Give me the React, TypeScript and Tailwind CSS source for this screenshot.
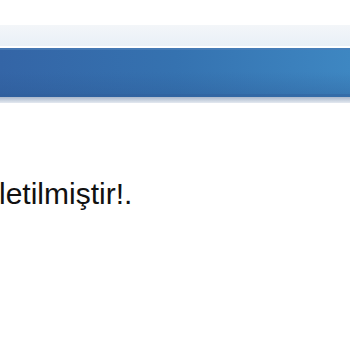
import React from "react";

export default function App() {
  return (
    <div className="w-[350px] h-[350px] bg-white overflow-hidden flex flex-col" style={{ fontFamily: '"Liberation Sans", Arial, sans-serif' }}>
      <div className="h-[25px] bg-white" />
      <div className="h-[21px] bg-gradient-to-b from-[#f3f6f9] to-[#e9f0f7]" />
      <div className="h-[2px] bg-white" />
      <div className="h-[49px] flex flex-col bg-gradient-to-r from-[#3465a6] via-[#3572b0] to-[#3e87c2]">
        <div className="h-[2px] bg-[#4d7fb8]/70" />
        <div className="flex-1 bg-gradient-to-b from-transparent via-transparent to-[#2a5590]/30" />
        <div className="h-[3px] bg-[#2e5b98]/60" />
      </div>
      <div className="h-[6px] bg-gradient-to-b from-[#aab8cc] to-[#e4e9f0]" />
      <div className="h-[74px]" />
      <div className="text-[30px] leading-[34px] text-[#111] ml-[-1px] whitespace-nowrap">letilmiştir!.</div>
    </div>
  );
}
